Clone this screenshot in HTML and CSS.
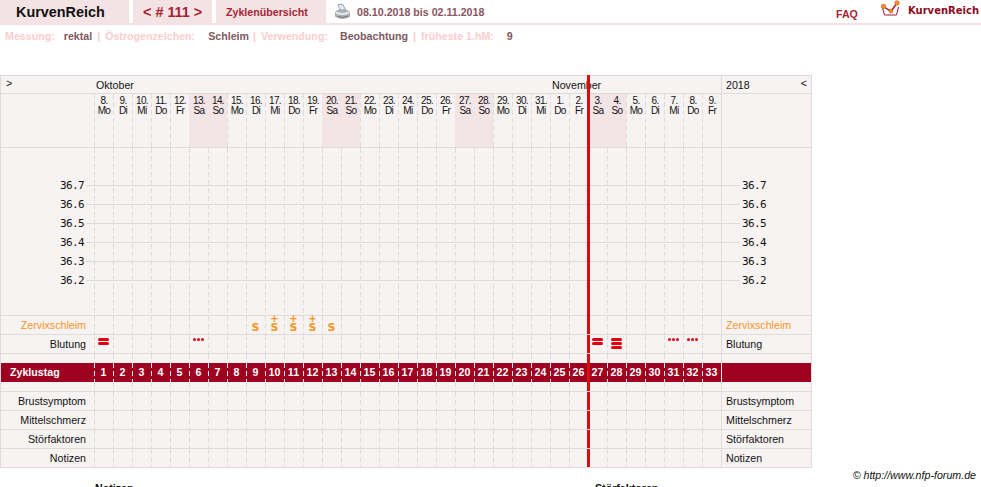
FILE: index.html
```html
<!DOCTYPE html>
<html lang="de">
  <head>
    <title>KurvenReich</title>
    <meta charset="UTF-8" />
    <link rel="stylesheet" href="styles.css">
  </head>
  <body>
    <header class="topbar">
      <div class="tab tab-brand">KurvenReich</div>
      <div class="tab tab-cycle">&lt; # 111 &gt;</div>
      <div class="tab tab-overview">Zyklenübersicht</div>
      <svg class="printer" width="15" height="16" viewBox="0 0 15 16">
        <path d="M3 0.5 L8 0.5 L10.5 6 L5 6.5 Z" fill="#e3ebf3" stroke="#7f97b4" stroke-width="0.8"/>
        <path d="M0.5 8 L3.5 6 L11 6 L14.5 8 L14.5 12.5 Q8 16.5 0.5 12.5 Z" fill="#aeb4b9" stroke="#8b9196" stroke-width="0.6"/>
        <path d="M1 8.5 Q7 11.5 14 8.5" fill="none" stroke="#f0f1f2" stroke-width="1.5"/>
        <path d="M2.5 12.5 Q8 14.5 13 12" fill="none" stroke="#6f7478" stroke-width="1"/>
      </svg>
      <div class="date-range">08.10.2018 bis 02.11.2018</div>
      <a class="faq">FAQ</a>
      <div class="logo">
        <svg width="21" height="18" viewBox="0 0 21 18">
          <path d="M1.5 8 L3.5 15 H15.5 L17.5 7" fill="#fff" stroke="#a8123a" stroke-width="1"/>
          <path d="M2.5 6.5 L10 11.5 L16 3" fill="none" stroke="#a8123a" stroke-width="1.4"/>
          <circle cx="2.5" cy="6.5" r="2.3" fill="#f39317" stroke="#b5482a" stroke-width="0.5"/>
          <circle cx="10" cy="11" r="2" fill="#f39317" stroke="#b5482a" stroke-width="0.5"/>
          <circle cx="16" cy="3" r="2.3" fill="#f39317" stroke="#b5482a" stroke-width="0.5"/>
        </svg>
        <span class="logo-text">KurvenReich</span>
      </div>
    </header>

    <div class="infobar">
      <span class="key k-mess">Messung:</span><span class="val v-mess">rektal</span><span class="key sep">|</span>
      <span class="key k-oest">Östrogenzeichen:</span><span class="val v-oest">Schleim</span><span class="key sep">|</span>
      <span class="key k-verw">Verwendung:</span><span class="val v-verw">Beobachtung</span><span class="key sep">|</span>
      <span class="key k-hm">früheste 1.hM:</span><span class="val">9</span>
    </div>

    <div class="chart">
      <div class="today today-top"></div>

      <div class="row row-month">
        <div class="label-left toggle">&gt;</div>
        <div class="days months">
          <span class="month-oct">Oktober</span>
          <span class="month-nov">November</span>
        </div>
        <div class="label-right year">2018 <span class="toggle-right">&lt;</span></div>
      </div>

      <div class="row row-dates">
        <div class="label-left"></div>
        <div class="days dashed">
          <span class="day">8.<br>Mo</span>
          <span class="day">9.<br>Di</span>
          <span class="day">10.<br>Mi</span>
          <span class="day">11.<br>Do</span>
          <span class="day">12.<br>Fr</span>
          <span class="day weekend">13.<br>Sa</span>
          <span class="day weekend">14.<br>So</span>
          <span class="day">15.<br>Mo</span>
          <span class="day">16.<br>Di</span>
          <span class="day">17.<br>Mi</span>
          <span class="day">18.<br>Do</span>
          <span class="day">19.<br>Fr</span>
          <span class="day weekend">20.<br>Sa</span>
          <span class="day weekend">21.<br>So</span>
          <span class="day">22.<br>Mo</span>
          <span class="day">23.<br>Di</span>
          <span class="day">24.<br>Mi</span>
          <span class="day">25.<br>Do</span>
          <span class="day">26.<br>Fr</span>
          <span class="day weekend">27.<br>Sa</span>
          <span class="day weekend">28.<br>So</span>
          <span class="day">29.<br>Mo</span>
          <span class="day">30.<br>Di</span>
          <span class="day">31.<br>Mi</span>
          <span class="day">1.<br>Do</span>
          <span class="day">2.<br>Fr</span>
          <span class="day weekend">3.<br>Sa</span>
          <span class="day weekend">4.<br>So</span>
          <span class="day">5.<br>Mo</span>
          <span class="day">6.<br>Di</span>
          <span class="day">7.<br>Mi</span>
          <span class="day">8.<br>Do</span>
          <span class="day">9.<br>Fr</span>
        </div>
        <div class="label-right"></div>
      </div>

      <!-- Temperature plot -->
      <div class="plot">
        <div class="plot-dashes"></div>
        <div class="plot-divider"></div>
        <div class="temp"><span class="temp-left">36.7</span><span class="temp-line"></span><span class="temp-right">36.7</span></div>
        <div class="temp"><span class="temp-left">36.6</span><span class="temp-line"></span><span class="temp-right">36.6</span></div>
        <div class="temp"><span class="temp-left">36.5</span><span class="temp-line"></span><span class="temp-right">36.5</span></div>
        <div class="temp"><span class="temp-left">36.4</span><span class="temp-line"></span><span class="temp-right">36.4</span></div>
        <div class="temp"><span class="temp-left">36.3</span><span class="temp-line"></span><span class="temp-right">36.3</span></div>
        <div class="temp"><span class="temp-left">36.2</span><span class="temp-line"></span><span class="temp-right">36.2</span></div>
      </div>

      <div class="row row-entry">
        <div class="label-left orange">Zervixschleim</div>
        <div class="days dashed marked">
          <span class="mucus" style="grid-column: 9">S</span>
          <span class="mucus plus" style="grid-column: 10">S</span>
          <span class="mucus plus" style="grid-column: 11">S</span>
          <span class="mucus plus" style="grid-column: 12">S</span>
          <span class="mucus" style="grid-column: 13">S</span>
        </div>
        <div class="label-right orange">Zervixschleim</div>
      </div>

      <div class="row row-entry">
        <div class="label-left">Blutung</div>
        <div class="days dashed marked">
          <span class="bars" style="grid-column: 1"><i></i><i></i></span>
          <span class="dots" style="grid-column: 6"><i></i><i></i><i></i></span>
          <span class="bars" style="grid-column: 27"><i></i><i></i></span>
          <span class="bars" style="grid-column: 28"><i></i><i></i><i></i></span>
          <span class="dots" style="grid-column: 31"><i></i><i></i><i></i></span>
          <span class="dots" style="grid-column: 32"><i></i><i></i><i></i></span>
        </div>
        <div class="label-right">Blutung</div>
      </div>

      <div class="row row-spacer">
        <div class="label-left"></div>
        <div class="days dashed marked"></div>
        <div class="label-right"></div>
      </div>

      <div class="row row-cycle">
        <div class="label-left">Zyklustag</div>
        <div class="days dashed marked">
          <span>1</span><span>2</span><span>3</span><span>4</span><span>5</span><span>6</span><span>7</span>
          <span>8</span><span>9</span><span>10</span><span>11</span><span>12</span><span>13</span><span>14</span>
          <span>15</span><span>16</span><span>17</span><span>18</span><span>19</span><span>20</span><span>21</span>
          <span>22</span><span>23</span><span>24</span><span>25</span><span>26</span><span>27</span><span>28</span>
          <span>29</span><span>30</span><span>31</span><span>32</span><span>33</span>
        </div>
        <div class="label-right"></div>
      </div>

      <div class="row row-spacer row-spacer-low">
        <div class="label-left"></div>
        <div class="days dashed marked"></div>
        <div class="label-right"></div>
      </div>

      <div class="row row-entry">
        <div class="label-left">Brustsymptom</div>
        <div class="days dashed marked"></div>
        <div class="label-right">Brustsymptom</div>
      </div>
      <div class="row row-entry">
        <div class="label-left">Mittelschmerz</div>
        <div class="days dashed marked"></div>
        <div class="label-right">Mittelschmerz</div>
      </div>
      <div class="row row-entry">
        <div class="label-left">Störfaktoren</div>
        <div class="days dashed marked"></div>
        <div class="label-right">Störfaktoren</div>
      </div>
      <div class="row row-entry">
        <div class="label-left">Notizen</div>
        <div class="days dashed marked"></div>
        <div class="label-right">Notizen</div>
      </div>
    </div>

    <div class="credit">© http://www.nfp-forum.de</div>

    <div class="notes">
      <div class="note note-left">Notizen</div>
      <div class="note">Störfaktoren</div>
    </div>
  </body>
</html>
```

FILE: styles.css
```css
* {
  margin: 0;
  padding: 0;
  box-sizing: border-box;
}

html, body {
  height: 100vh;
  overflow: hidden;
}

body {
  font-family: 'Liberation Sans', Arial, sans-serif;
  font-size: 10.67px;
  background: #fff;
  color: #111;
}

/* Top navigation */
.topbar {
  display: flex;
  height: 25px;
  border-bottom: 2px solid #f3e1e3;
}

.tab {
  display: flex;
  align-items: center;
  background: #f3e3e5;
  font-weight: bold;
  color: #a81f32;
}

.tab-brand {
  width: 129px;
  padding-left: 16px;
  margin-right: 4px;
  font-size: 14.4px;
  color: #111;
}

.tab-cycle {
  width: 79px;
  padding-left: 10px;
  margin-right: 4px;
  font-size: 14.4px;
}

.tab-overview {
  width: 110px;
  padding-left: 10px;
}

.printer {
  margin: 4px 7px 0 9px;
}

.date-range {
  padding-top: 6px;
  width: 479px;
  font-weight: bold;
  color: #8a5560;
}

.faq {
  padding-top: 8px;
  width: 45px;
  font-weight: bold;
  color: #a81f32;
}

.logo {
  display: flex;
  gap: 6px;
}

.logo svg {
  flex-shrink: 0;
}

.logo-text {
  padding-top: 5px;
  font-family: 'DejaVu Sans', sans-serif;
  font-size: 10px;
  font-weight: bold;
  color: #8e0a22;
  white-space: nowrap;
}

/* Cycle settings line */
.infobar {
  display: flex;
  height: 50px;
  padding: 5px 0 0 5px;
  font-weight: bold;
  white-space: nowrap;
}

.key {
  color: #fbcdce;
}

.val {
  color: #80585f;
}

.sep {
  margin: 0 5px 0 5px;
}

.k-mess { margin-right: 9px; }
.k-oest { margin-right: 13px; }
.k-verw { margin-right: 12px; }
.k-hm { margin-right: 13px; }
.v-oest { margin-right: -1px; }

/* Chart table */
.chart {
  position: relative;
  width: 812px;
  border: solid #dfdbdb;
  border-width: 1px 1px 0;
  background: #f8f3f3;
}

.row {
  display: grid;
  grid-template-columns: 93px 627px 90px;
  border-bottom: 1px solid #dfdbdb;
}

.label-left {
  padding-right: 8px;
  text-align: right;
  line-height: 18px;
}

.label-right {
  padding-left: 4px;
  border-left: 1px solid #dfdbdb;
  line-height: 18px;
}

.orange {
  color: #f7931e;
}

.days {
  position: relative;
  display: grid;
  grid-template-columns: repeat(33, 19px);
}

.dashed::before,
.plot-dashes {
  content: '';
  position: absolute;
  top: 0;
  bottom: 0;
  left: 0;
  right: 0;
  background: repeating-linear-gradient(90deg, #dfdbdb 0 1px, transparent 1px 19px);
  -webkit-mask-image: repeating-linear-gradient(#000 0 5px, transparent 5px 8px);
  mask-image: repeating-linear-gradient(#000 0 5px, transparent 5px 8px);
}

/* Red marker of the current day */
.today,
.marked::after {
  content: '';
  position: absolute;
  left: 493px;
  width: 3px;
  background: #d90b0f;
  z-index: 2;
}

.marked::after {
  top: 0;
  bottom: 0;
}

.today-top {
  top: -1px;
  left: 586px;
  height: 241px;
}

.row-month {
  height: 18px;
}

.months span {
  grid-row: 1;
  line-height: 18px;
  white-space: nowrap;
}

.month-oct {
  grid-column: 1 / span 5;
  padding-left: 2px;
}

.month-nov {
  grid-column: 25 / span 6;
  padding-left: 2px;
}

.toggle {
  padding: 0 0 0 5px;
  text-align: left;
  line-height: 14px;
}

.year {
  display: flex;
  justify-content: space-between;
  padding-right: 4px;
}

.toggle-right {
  line-height: 14px;
}

.row-dates {
  height: 54px;
}

.day {
  position: relative;
  padding: 2px 0 0 1px;
  font-size: 10px;
  line-height: 10px;
  letter-spacing: -0.6px;
  text-align: center;
}

.weekend {
  background: #f3e4e6;
}

/* Temperature plot */
.plot {
  position: relative;
  height: 168px;
  padding-top: 28px;
  border-bottom: 1px solid #dfdbdb;
}

.plot-dashes {
  left: 93px;
  right: 90px;
}

.plot-divider {
  position: absolute;
  top: 0;
  bottom: 0;
  left: 720px;
  width: 1px;
  background: #dfdbdb;
}

.temp {
  display: flex;
  align-items: center;
  height: 19px;
  font-family: 'DejaVu Sans Mono', monospace;
  font-size: 11px;
  letter-spacing: -0.6px;
}

.temp-left {
  width: 83px;
  text-align: right;
}

.temp-line {
  width: 654px;
  height: 1px;
  margin: 0 2px 0 2px;
  background: #dfdbdb;
}

.row-entry {
  height: 19px;
}

.row-spacer {
  height: 9px;
  border-bottom: 0;
}

.row-spacer-low {
  height: 10px;
  border-bottom: 1px solid #dfdbdb;
}

.row-cycle {
  height: 19px;
  border-bottom: 0;
  background: #9e0020;
  color: #fff;
  font-weight: bold;
}

.row-cycle .label-left {
  padding: 0 0 0 9px;
  text-align: left;
  line-height: 19px;
}

.row-cycle .days span {
  text-align: center;
  line-height: 19px;
}

.row-cycle .dashed::before {
  background: repeating-linear-gradient(90deg, #f4e6e8 0 1px, transparent 1px 19px);
}

.row-cycle .label-right {
  border-left-color: #f8f3f3;
}

/* Entries inside the day columns */
.mucus {
  position: relative;
  grid-row: 1;
  padding-top: 5px;
  font-family: 'DejaVu Sans', sans-serif;
  font-size: 11px;
  font-weight: bold;
  line-height: 13px;
  text-align: center;
  color: #f7931e;
}

.plus::before {
  content: '+';
  position: absolute;
  top: -2px;
  left: 0;
  right: 0;
  font-size: 10px;
  line-height: 10px;
}

.bars,
.dots {
  grid-row: 1;
  display: flex;
}

.bars {
  flex-direction: column;
  gap: 1px;
  padding: 3px 4px 0;
}

.bars i {
  height: 3px;
  border-radius: 2px;
  background: #e0000f;
}

.dots {
  justify-content: center;
  gap: 1px;
  padding-top: 3px;
}

.dots i {
  width: 3px;
  height: 3px;
  border-radius: 50%;
  background: #e0000f;
}

/* Below the chart */
.credit {
  height: 14px;
  width: 976px;
  padding-top: 1px;
  font-style: italic;
  text-align: right;
  line-height: 13px;
}

.notes {
  display: flex;
  padding: 0 0 0 95px;
  font-weight: bold;
}

.note-left {
  width: 500px;
}
```
